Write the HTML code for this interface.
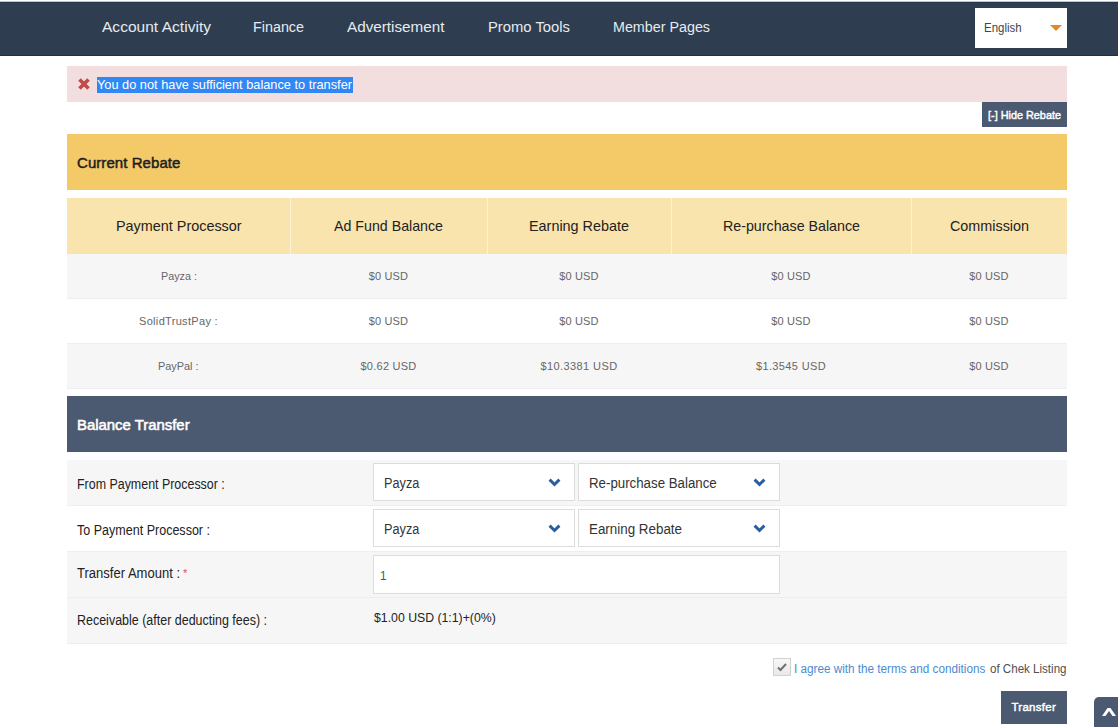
<!DOCTYPE html>
<html><head><meta charset="utf-8"><style>
html,body{margin:0;padding:0;width:1118px;height:727px;overflow:hidden;background:#fff;position:relative;font-family:"Liberation Sans", sans-serif;}
.b{position:absolute;}
.t{position:absolute;white-space:pre;font-family:"Liberation Sans", sans-serif;}
</style></head><body>
<div class="b" style="left:0px;top:0px;width:1118px;height:1px;background:#ffffff;"></div>
<div class="b" style="left:0px;top:1px;width:1118px;height:1px;background:#c4c4c4;"></div>
<div class="b" style="left:0px;top:2px;width:1118px;height:1px;background:#26364a;"></div>
<div class="b" style="left:0px;top:3px;width:1118px;height:52px;background:#2e3e50;"></div>
<div class="b" style="left:0px;top:55px;width:1118px;height:1px;background:#1f2e42;"></div>
<div class="t" style="left:102px;top:19.48px;font-size:15.5px;line-height:15.5px;color:#e6ebef;font-weight:400;letter-spacing:0.028px;">Account Activity</div>
<div class="t" style="left:253px;top:19.48px;font-size:15.5px;line-height:15.5px;color:#e6ebef;font-weight:400;letter-spacing:0px;transform:scaleX(0.9246);transform-origin:0 0;">Finance</div>
<div class="t" style="left:347px;top:19.48px;font-size:15.5px;line-height:15.5px;color:#e6ebef;font-weight:400;letter-spacing:0px;transform:scaleX(0.9831);transform-origin:0 0;">Advertisement</div>
<div class="t" style="left:488px;top:19.48px;font-size:15.5px;line-height:15.5px;color:#e6ebef;font-weight:400;letter-spacing:0px;transform:scaleX(0.9549);transform-origin:0 0;">Promo Tools</div>
<div class="t" style="left:613px;top:19.48px;font-size:15.5px;line-height:15.5px;color:#e6ebef;font-weight:400;letter-spacing:0px;transform:scaleX(0.9228);transform-origin:0 0;">Member Pages</div>
<div class="b" style="left:975px;top:8px;width:92px;height:40px;background:#ffffff;"></div>
<div class="t" style="left:984px;top:21.84px;font-size:12px;line-height:12px;color:#444444;font-weight:400;letter-spacing:0px;transform:scaleX(0.9553);transform-origin:0 0;">English</div>
<svg class="b" style="left:1050px;top:25px" width="12" height="6" viewBox="0 0 12 6"><path d="M0 0H12L6 6Z" fill="#e3892b"/></svg>
<div class="b" style="left:67px;top:66px;width:1000px;height:36px;background:#f2dede;"></div>
<svg class="b" style="left:78px;top:78px" width="12" height="12" viewBox="0 0 12 12"><path d="M1.5 1.5L10.5 10.5M10.5 1.5L1.5 10.5" stroke="#be4c49" stroke-width="3.7" stroke-linecap="butt"/></svg>
<div class="b" style="left:97px;top:77px;width:256px;height:16px;background:#3188f5;"></div>
<div class="t" style="left:97px;top:78.00px;font-size:13px;line-height:13px;color:#ffffff;font-weight:400;letter-spacing:0px;transform:scaleX(0.9828);transform-origin:0 0;">You do not have sufficient balance to transfer</div>
<div class="b" style="left:982px;top:102px;width:85px;height:25px;background:#4b5a70;"></div>
<div class="t" style="left:988px;top:110.07px;font-size:11.5px;line-height:11.5px;color:#ffffff;font-weight:400;letter-spacing:0px;-webkit-text-stroke:0.45px #fff;transform:scaleX(0.9436);transform-origin:0 0;">[-] Hide Rebate</div>
<div class="b" style="left:67px;top:134px;width:1000px;height:56px;background:#f4ca69;"></div>
<div class="t" style="left:77px;top:155.30px;font-size:15px;line-height:15px;color:#1e1e1e;font-weight:400;letter-spacing:0.067px;-webkit-text-stroke:0.5px #1e1e1e;">Current Rebate</div>
<div class="b" style="left:67px;top:198px;width:1000px;height:56px;background:#f9e4ad;"></div>
<div class="b" style="left:290px;top:198px;width:1px;height:56px;background:#fdf1d6;"></div>
<div class="b" style="left:487px;top:198px;width:1px;height:56px;background:#fdf1d6;"></div>
<div class="b" style="left:671px;top:198px;width:1px;height:56px;background:#fdf1d6;"></div>
<div class="b" style="left:911px;top:198px;width:1px;height:56px;background:#fdf1d6;"></div>
<div class="t" style="left:115.7px;top:217.80px;font-size:15px;line-height:15px;color:#222222;font-weight:400;letter-spacing:0px;transform:scaleX(0.9596);transform-origin:0 0;">Payment Processor</div>
<div class="t" style="left:334.0px;top:217.80px;font-size:15px;line-height:15px;color:#222222;font-weight:400;letter-spacing:0px;transform:scaleX(0.9472);transform-origin:0 0;">Ad Fund Balance</div>
<div class="t" style="left:529.0px;top:217.80px;font-size:15px;line-height:15px;color:#222222;font-weight:400;letter-spacing:0px;transform:scaleX(0.9592);transform-origin:0 0;">Earning Rebate</div>
<div class="t" style="left:722.5px;top:217.80px;font-size:15px;line-height:15px;color:#222222;font-weight:400;letter-spacing:0px;transform:scaleX(0.9496);transform-origin:0 0;">Re-purchase Balance</div>
<div class="t" style="left:949.5px;top:217.80px;font-size:15px;line-height:15px;color:#222222;font-weight:400;letter-spacing:0px;transform:scaleX(0.9574);transform-origin:0 0;">Commission</div>
<div class="b" style="left:67px;top:254px;width:1000px;height:44px;background:#f6f6f6;"></div>
<div class="b" style="left:67px;top:298px;width:1000px;height:1px;background:#eeeeee;"></div>
<div class="t" style="left:160.5px;top:270.69px;font-size:11px;line-height:11px;color:#666666;font-weight:400;letter-spacing:0px;transform:scaleX(0.9813);transform-origin:0 0;">Payza :</div>
<div class="t" style="left:368.8px;top:270.69px;font-size:11px;line-height:11px;color:#666666;font-weight:400;letter-spacing:0.145px;">$0 USD</div>
<div class="t" style="left:559.3px;top:270.69px;font-size:11px;line-height:11px;color:#666666;font-weight:400;letter-spacing:0.145px;">$0 USD</div>
<div class="t" style="left:771.3px;top:270.69px;font-size:11px;line-height:11px;color:#666666;font-weight:400;letter-spacing:0.145px;">$0 USD</div>
<div class="t" style="left:969.3px;top:270.69px;font-size:11px;line-height:11px;color:#666666;font-weight:400;letter-spacing:0.145px;">$0 USD</div>
<div class="b" style="left:67px;top:299px;width:1000px;height:44px;background:#ffffff;"></div>
<div class="b" style="left:67px;top:343px;width:1000px;height:1px;background:#eeeeee;"></div>
<div class="t" style="left:139.0px;top:315.69px;font-size:11px;line-height:11px;color:#666666;font-weight:400;letter-spacing:0.321px;">SolidTrustPay :</div>
<div class="t" style="left:368.8px;top:315.69px;font-size:11px;line-height:11px;color:#666666;font-weight:400;letter-spacing:0.145px;">$0 USD</div>
<div class="t" style="left:559.3px;top:315.69px;font-size:11px;line-height:11px;color:#666666;font-weight:400;letter-spacing:0.145px;">$0 USD</div>
<div class="t" style="left:771.3px;top:315.69px;font-size:11px;line-height:11px;color:#666666;font-weight:400;letter-spacing:0.145px;">$0 USD</div>
<div class="t" style="left:969.3px;top:315.69px;font-size:11px;line-height:11px;color:#666666;font-weight:400;letter-spacing:0.145px;">$0 USD</div>
<div class="b" style="left:67px;top:344px;width:1000px;height:44px;background:#f6f6f6;"></div>
<div class="b" style="left:67px;top:388px;width:1000px;height:1px;background:#eeeeee;"></div>
<div class="t" style="left:158.2px;top:360.69px;font-size:11px;line-height:11px;color:#666666;font-weight:400;letter-spacing:0px;transform:scaleX(0.9910);transform-origin:0 0;">PayPal :</div>
<div class="t" style="left:360.5px;top:360.69px;font-size:11px;line-height:11px;color:#666666;font-weight:400;letter-spacing:0.243px;">$0.62 USD</div>
<div class="t" style="left:540.5px;top:360.69px;font-size:11px;line-height:11px;color:#666666;font-weight:400;letter-spacing:0.402px;">$10.3381 USD</div>
<div class="t" style="left:756.0px;top:360.69px;font-size:11px;line-height:11px;color:#666666;font-weight:400;letter-spacing:0.359px;">$1.3545 USD</div>
<div class="t" style="left:969.3px;top:360.69px;font-size:11px;line-height:11px;color:#666666;font-weight:400;letter-spacing:0.145px;">$0 USD</div>
<div class="b" style="left:67px;top:396px;width:1000px;height:56px;background:#4b5a70;"></div>
<div class="t" style="left:77px;top:417.30px;font-size:15px;line-height:15px;color:#ffffff;font-weight:400;letter-spacing:0px;-webkit-text-stroke:0.55px #fff;transform:scaleX(0.9929);transform-origin:0 0;">Balance Transfer</div>
<div class="b" style="left:67px;top:460px;width:1000px;height:45px;background:#f6f6f6;"></div>
<div class="b" style="left:67px;top:505px;width:1000px;height:1px;background:#eeeeee;"></div>
<div class="b" style="left:67px;top:506px;width:1000px;height:45px;background:#ffffff;"></div>
<div class="b" style="left:67px;top:551px;width:1000px;height:1px;background:#eeeeee;"></div>
<div class="b" style="left:67px;top:552px;width:1000px;height:45px;background:#f6f6f6;"></div>
<div class="b" style="left:67px;top:597px;width:1000px;height:1px;background:#eeeeee;"></div>
<div class="b" style="left:67px;top:598px;width:1000px;height:45px;background:#f6f6f6;"></div>
<div class="b" style="left:67px;top:643px;width:1000px;height:1px;background:#eeeeee;"></div>
<div class="t" style="left:77px;top:476.65px;font-size:14px;line-height:14px;color:#222222;font-weight:400;letter-spacing:0px;transform:scaleX(0.8877);transform-origin:0 0;">From Payment Processor :</div>
<div class="t" style="left:77px;top:522.65px;font-size:14px;line-height:14px;color:#222222;font-weight:400;letter-spacing:0px;transform:scaleX(0.8949);transform-origin:0 0;">To Payment Processor :</div>
<div class="t" style="left:77px;top:566.15px;font-size:14px;line-height:14px;color:#222222;font-weight:400;letter-spacing:0px;transform:scaleX(0.9300);transform-origin:0 0;">Transfer Amount :</div>
<div class="t" style="left:183px;top:567.69px;font-size:11px;line-height:11px;color:#e74c3c;font-weight:400;letter-spacing:0px;">*</div>
<div class="t" style="left:77px;top:613.15px;font-size:14px;line-height:14px;color:#222222;font-weight:400;letter-spacing:0px;transform:scaleX(0.8910);transform-origin:0 0;">Receivable (after deducting fees) :</div>
<div class="b" style="left:373px;top:463px;width:202px;height:38px;background:#ffffff;border:1px solid #dcdcdc;box-sizing:border-box;"></div>
<div class="t" style="left:384px;top:476.15px;font-size:14px;line-height:14px;color:#333333;font-weight:400;letter-spacing:0px;transform:scaleX(0.9069);transform-origin:0 0;">Payza</div>
<svg class="b" style="left:548px;top:478px" width="13" height="9" viewBox="0 0 13 9"><path d="M1.6 1.6L6.5 6.5L11.4 1.6" fill="none" stroke="#2a5d9f" stroke-width="3"/></svg>
<div class="b" style="left:578px;top:463px;width:202px;height:38px;background:#ffffff;border:1px solid #dcdcdc;box-sizing:border-box;"></div>
<div class="t" style="left:589px;top:476.15px;font-size:14px;line-height:14px;color:#333333;font-weight:400;letter-spacing:0px;transform:scaleX(0.9485);transform-origin:0 0;">Re-purchase Balance</div>
<svg class="b" style="left:753px;top:478px" width="13" height="9" viewBox="0 0 13 9"><path d="M1.6 1.6L6.5 6.5L11.4 1.6" fill="none" stroke="#2a5d9f" stroke-width="3"/></svg>
<div class="b" style="left:373px;top:509px;width:202px;height:38px;background:#ffffff;border:1px solid #dcdcdc;box-sizing:border-box;"></div>
<div class="t" style="left:384px;top:522.15px;font-size:14px;line-height:14px;color:#333333;font-weight:400;letter-spacing:0px;transform:scaleX(0.9069);transform-origin:0 0;">Payza</div>
<svg class="b" style="left:548px;top:524px" width="13" height="9" viewBox="0 0 13 9"><path d="M1.6 1.6L6.5 6.5L11.4 1.6" fill="none" stroke="#2a5d9f" stroke-width="3"/></svg>
<div class="b" style="left:578px;top:509px;width:202px;height:38px;background:#ffffff;border:1px solid #dcdcdc;box-sizing:border-box;"></div>
<div class="t" style="left:589px;top:522.15px;font-size:14px;line-height:14px;color:#333333;font-weight:400;letter-spacing:0px;transform:scaleX(0.9558);transform-origin:0 0;">Earning Rebate</div>
<svg class="b" style="left:753px;top:524px" width="13" height="9" viewBox="0 0 13 9"><path d="M1.6 1.6L6.5 6.5L11.4 1.6" fill="none" stroke="#2a5d9f" stroke-width="3"/></svg>
<div class="b" style="left:373px;top:555px;width:407px;height:39px;background:#ffffff;border:1px solid #dcdcdc;box-sizing:border-box;"></div>
<div class="t" style="left:380px;top:569.00px;font-size:13px;line-height:13px;color:#555555;font-weight:400;letter-spacing:0px;transform:scaleX(0.8985);transform-origin:0 0;">1</div>
<div class="t" style="left:373.5px;top:611.00px;font-size:13px;line-height:13px;color:#222222;font-weight:400;letter-spacing:0px;transform:scaleX(0.9443);transform-origin:0 0;">$1.00 USD (1:1)+(0%)</div>
<div class="b" style="left:773px;top:658px;width:18px;height:18px;background:linear-gradient(#f7f7f7,#e9e9e9);border:1px solid #d2d2d2;box-sizing:border-box;"></div>
<svg class="b" style="left:776px;top:662px" width="12" height="10" viewBox="0 0 12 10"><path d="M2 5.5L4.5 8L10 2" fill="none" stroke="#707070" stroke-width="2"/></svg>
<div class="t" style="left:793.5px;top:662.84px;font-size:12px;line-height:12px;color:#4a8bd0;font-weight:400;letter-spacing:0px;transform:scaleX(0.9755);transform-origin:0 0;">I agree with the terms and conditions</div>
<div class="t" style="left:989.5px;top:662.84px;font-size:12px;line-height:12px;color:#505050;font-weight:400;letter-spacing:0px;transform:scaleX(0.9636);transform-origin:0 0;">of Chek Listing</div>
<div class="b" style="left:1001px;top:691px;width:66px;height:33px;background:#4b5a70;"></div>
<div class="t" style="left:1011.5px;top:702.47px;font-size:11.5px;line-height:11.5px;color:#ffffff;font-weight:400;letter-spacing:0.264px;-webkit-text-stroke:0.45px #fff;">Transfer</div>
<div class="b" style="left:1094px;top:697px;width:40px;height:40px;background:#4b5a70;border-radius:5px;"></div>
<svg class="b" style="left:1100px;top:706px" width="18" height="12" viewBox="0 0 18 12"><path d="M2 10L7.5 2H10.5L16 10H12.5L9 5L5.5 10Z" fill="#fff"/></svg>
</body></html>
